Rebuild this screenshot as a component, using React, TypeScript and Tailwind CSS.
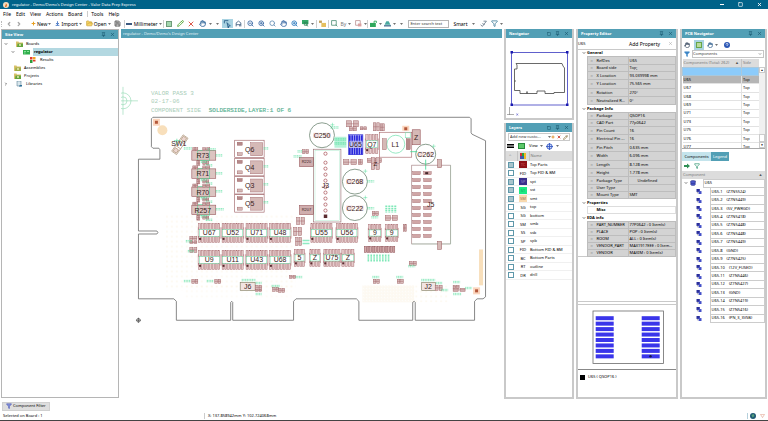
import {
  ArrowDownToLine,
  ChevronDown,
  ChevronLeft,
  ChevronRight,
  Database,
  Filter,
  FolderOpen,
  Hand,
  Pencil,
  Pin,
  Plus,
  Save,
  Search,
  Square,
  X,
  ZoomIn,
  ZoomOut,
} from "lucide-react";
import type { ReactNode } from "react";

const MENU = ["File", "Edit", "View", "Actions", "Board", "Tools", "Help"];

const LAYERS = [
  { code: "TC", name: "Top Parts", on: true, color: "bg-[#8f1218] text-[#d06060]" },
  { code: "FID", name: "Top FID & BM" },
  { code: "SP", name: "spt", on: true, color: "bg-[#3a2f8c] text-[#8f88d0]" },
  { code: "ST", name: "sst", on: true, color: "bg-[#1dea84] text-[#0fa85a]" },
  { code: "SM", name: "smt", on: true, color: "bg-[#f8d9ae] text-[#9a6a50]" },
  { code: "SG", name: "top" },
  { code: "SG", name: "bottom" },
  { code: "SM", name: "smb" },
  { code: "SS", name: "ssb" },
  { code: "SP", name: "spb" },
  { code: "FID", name: "Bottom FID & BM" },
  { code: "BC", name: "Bottom Parts" },
  { code: "RT", name: "outline" },
  { code: "DR", name: "drill" },
];

type PropRow = { label: string; value: string; h: string; indent?: boolean };
type PropGroup = { title: string; h: string; rows: PropRow[] };

const S = "h-[7px]";
const M = "h-[8px]";
const L = "h-[9px]";

const PROPS: PropGroup[] = [
  {
    title: "General",
    h: S,
    rows: [
      { label: "RefDes", value: "U65", h: M },
      { label: "Board side", value: "Top;", h: S },
      { label: "X Location", value: "93.039998 mm", h: M },
      { label: "Y Location", value: "75.565 mm", h: L },
      { label: "Rotation", value: "270°", h: M },
      { label: "Neutralized R...", value: "0°", h: M },
    ],
  },
  {
    title: "Package Info",
    h: M,
    rows: [
      { label: "Package", value: "QSOP16", h: S },
      { label: "CAD Part", value: "77p0642", h: S },
      { label: "Pin Count", value: "16", h: M },
      { label: "Electrical Pin ...", value: "16", h: L },
      { label: "Pin Pitch", value: "0.635 mm", h: M },
      { label: "Width", value: "6.096 mm", h: L },
      { label: "Length", value: "8.128 mm", h: M },
      { label: "Height", value: "1.778 mm", h: M },
      { label: "Package Type", value: "Undefined", h: M, indent: true },
      { label: "User Type", value: "", h: S },
      { label: "Mount Type", value: "SMT", h: S },
    ],
  },
  { title: "Properties", h: M, rows: [] },
  {
    title: "EDA info",
    h: M,
    rows: [
      { label: "PART_NUMBER", value: "77P0642 : 0 Item(s)", h: S },
      { label: "PLACE", value: "POP : 0 Item(s)", h: S },
      { label: "ROOM", value: "ALL : 0 Item(s)", h: S },
      { label: "VENDOR_PART", value: "MAX1917EEE : 0 Item...", h: S },
      { label: "VENDOR", value: "MAXIM : 0 Item(s)", h: S },
    ],
  },
];

const COMPONENTS = ["U65", "U67", "U68", "U69", "U71", "U73", "U75", "U76", "U77"];

const PINS = [
  "Z7N5524",
  "Z7N5449",
  "5V_PWRGD",
  "Z7N5418",
  "Z7N5448",
  "Z7N5448",
  "Z7N5449",
  "GND",
  "Z7N5425",
  "12V_FUSED",
  "Z7N5446",
  "Z7N5427",
  "GND",
  "Z7N5419",
  "Z7N5416",
  "PN_3_3VSB",
];

function Caret() {
  return (
    <svg viewBox="0 0 4 2" className="h-[2px] w-[3px] shrink-0">
      <path d="M0 0h4L2 2z" fill="#444" />
    </svg>
  );
}

function Sep() {
  return <span className="h-[8px] w-px shrink-0 bg-[#cfcfcf]" />;
}

function Tool({ label, active, children }: { label: string; active?: boolean; children: ReactNode }) {
  return (
    <button
      type="button"
      aria-label={label}
      className={`flex h-[9px] w-[11px] shrink-0 items-center justify-center ${active ? "bg-[#a9d3e2]" : ""}`}
    >
      {children}
    </button>
  );
}

function PanelHeader({ title, max }: { title: string; max?: boolean }) {
  return (
    <header className="flex h-[9px] shrink-0 items-center justify-between bg-[#529fb5] px-[3px] text-white">
      <h2 className="font-bold">{title}</h2>
      <div className="flex items-center gap-[4px] text-[#1c5a70]">
        {max && <Square size={4} strokeWidth={3} />}
        <Pin size={5} strokeWidth={3} />
        <X size={5} strokeWidth={3} />
      </div>
    </header>
  );
}

function FolderIcon({ color }: { color: string }) {
  return (
    <svg viewBox="0 0 14 12" className="h-[6px] w-[7px] shrink-0">
      <path d="M0 1h5l1 2h8v9H0z" fill="#d9c26a" />
      <path d="M3 5h11v7H2z" fill={color} />
      <circle cx="8" cy="8" r="1.8" fill="#f4f0c0" />
    </svg>
  );
}

function SiteTree() {
  return (
    <ul className="pt-px">
      <li className="flex h-[8px] items-center gap-[3px] pl-[2px]">
        <ChevronDown size={4} strokeWidth={3} />
        <span className="w-[2px]" />
        <FolderIcon color="#63a53c" />
        Boards
      </li>
      <li className="flex h-[8px] items-center gap-[3px] pl-[9px]">
        <ChevronDown size={4} strokeWidth={3} />
        <span className="w-[2px]" />
        <svg viewBox="0 0 14 10" className="h-[5px] w-[7px] shrink-0">
          <rect width="14" height="9" fill="#2fae4c" />
          <path d="M2 3h4M8 3h4M2 6h3" stroke="#a6efb0" strokeWidth="1.5" />
        </svg>
        <a href="#regulator" className="h-full flex-1 bg-[#b3d8e1] pl-px font-bold leading-[8px]">
          regulator
        </a>
      </li>
      <li className="flex h-[8px] items-center gap-[3px] pl-[28px]">
        <svg viewBox="0 0 12 12" className="h-[6px] w-[6px] shrink-0">
          <rect width="5" height="5" fill="#e03c2c" />
          <rect x="6" width="5" height="5" fill="#f2a51e" />
          <rect y="6" width="5" height="6" fill="#2e9b3c" />
          <rect x="6" y="6" width="5" height="3" fill="#e03c2c" />
        </svg>
        <span className="pl-px">Results</span>
      </li>
      <li className="flex h-[8px] items-center gap-[3px] pl-[12px]">
        <FolderIcon color="#9fae48" />
        Assemblies
      </li>
      <li className="flex h-[8px] items-center gap-[3px] pl-[12px]">
        <FolderIcon color="#63a53c" />
        Projects
      </li>
      <li className="flex h-[8px] items-center gap-[3px] pl-[2px]">
        <ChevronRight size={4} strokeWidth={3} />
        <span className="w-[2px]" />
        <svg viewBox="0 0 14 12" className="h-[6px] w-[7px] shrink-0">
          <path d="M2 0h8v10H2z" fill="#d8e6ec" stroke="#466d85" />
          <path d="M6 10l2-2h4v3H6z" fill="#2d6f97" />
        </svg>
        Libraries
      </li>
    </ul>
  );
}

/* Board drawing */

function Scribble({ x, y, w = 8 }: { x: number; y: number; w?: number }) {
  return (
    <path
      d={`M${x} ${y}h${w}M${x} ${y + 1.4}h${w}`}
      stroke="#35d98c"
      strokeWidth="0.8"
      strokeDasharray="1.2 0.5"
      opacity="0.7"
    />
  );
}

function Passive({ x, y, w = 7, h = 4 }: { x: number; y: number; w?: number; h?: number }) {
  return (
    <g fill="#d9bcbc" stroke="#a3686b" strokeWidth="0.5">
      <rect x={x} y={y} width={w * 0.42} height={h} />
      <rect x={x + w * 0.58} y={y} width={w * 0.42} height={h} />
      <path d={`M${x} ${y + h / 2}h${w}`} />
    </g>
  );
}

function Label({ x, y, size = 7, children }: { x: number; y: number; size?: number; children: string }) {
  return (
    <text x={x} y={y + size * 0.36} fontSize={size} textAnchor="middle" fill="#3a1c20" stroke="none">
      {children}
    </text>
  );
}

function Chip({ x, y, w = 22, h = 19, n = 8, name }: { x: number; y: number; w?: number; h?: number; n?: number; name: string }) {
  const pitch = w / n;
  return (
    <g>
      {Array.from({ length: n }, (_, i) => (
        <g key={i} fill="#e6cbcb" stroke="#a86c70" strokeWidth="0.5">
          <rect x={x + i * pitch + 0.4} y={y} width={pitch - 0.9} height={h * 0.31} />
          <rect x={x + i * pitch + 0.4} y={y + h * 0.69} width={pitch - 0.9} height={h * 0.31} />
        </g>
      ))}
      <rect x={x + 1} y={y + h * 0.32} width={w - 2} height={h * 0.36} fill="#fff" stroke="#5fdca0" strokeWidth="0.5" />
      <path d={`M${x} ${y + h * 0.2}v${h * 0.6}M${x + w} ${y + h * 0.2}v${h * 0.6}`} stroke="#a25f63" strokeWidth="0.5" />
      <rect x={x + 0.8} y={y + h * 0.76} width="2" height="2" fill="#5b2c30" />
      <Label x={x + w / 2} y={y + h / 2}>
        {name}
      </Label>
    </g>
  );
}

function RoundCap({ cx, cy, r, name }: { cx: number; cy: number; r: number; name: string }) {
  return (
    <g>
      <rect x={cx - r * 0.7} y={cy - 2.5} width={r * 0.5} height="5" fill="#f0dcdc" />
      <rect x={cx + r * 0.2} y={cy - 2.5} width={r * 0.5} height="5" fill="#f0dcdc" />
      <circle cx={cx} cy={cy} r={r} fill="none" stroke="#6d8572" strokeWidth="0.8" />
      <path d={`M${cx + r - 2} ${cy - r}v4M${cx + r - 4} ${cy - r + 2}h4`} stroke="#35d98c" strokeWidth="0.4" />
      <Label x={cx} y={cy}>
        {name}
      </Label>
    </g>
  );
}

const BOARD_OUTLINE =
  "M153 117.5H470.5L472 119V133L473 134.5L486.5 141V297.5L484 299.5H478L475.5 302V321H416V303L415 302L413.500 303V321H359.500V302L357 299.500H296.500L294 302V321H233V303L232 302L231 303V321H176.500V302L174 299.500H138.500V234.500H157L158 233L157 231.500H138.500V159.500H160V150L159 148.500H153L151.500 147V119Z";

const PASSIVES: [number, number, number?, number?][] = [
  [190, 237, 7, 4],
  [190, 242, 7, 2],
  [190, 248, 7, 5],
  [192, 280, 6, 4],
  [215, 280, 6, 4],
  [256, 286, 6, 4],
  [256, 290, 6, 2],
  [273, 288, 6, 4],
  [279, 289, 6, 4],
  [290, 276, 6, 3],
  [303, 150, 6, 4],
  [347, 121, 12, 6],
  [350, 127, 7, 4],
  [361, 127, 6, 3],
  [344, 160, 13, 5],
  [359, 160, 4, 5],
  [374, 123, 6, 8],
  [381, 124, 4, 7],
  [368, 159, 14, 4],
  [372, 158, 8, 12],
  [373, 212, 6, 4],
  [386, 216, 12, 5],
  [404, 225, 3, 7],
  [410, 262, 7, 4],
  [374, 280, 6, 4],
  [398, 280, 6, 4],
  [436, 286, 7, 5],
  [454, 286, 6, 3],
  [454, 289, 12, 3],
  [297, 218, 8, 7],
  [294, 228, 8, 8],
  [296, 238, 6, 8],
];

const SCRIBBLES: [number, number, number?][] = [
  [184, 148, 8],
  [208, 149, 8],
  [216, 155, 7],
  [216, 173, 7],
  [216, 191, 7],
  [216, 209, 8],
  [184, 281, 7],
  [207, 281, 7],
  [186, 241, 6],
  [188, 251, 6],
  [272, 286, 8],
  [296, 277, 7],
  [294, 156, 8],
  [298, 151, 5],
  [331, 127, 8],
  [368, 181, 7],
  [368, 208, 7],
  [372, 217, 7],
  [373, 277, 7],
  [397, 277, 7],
  [409, 266, 7],
  [422, 280, 14],
  [242, 280, 14],
  [256, 283, 6],
  [437, 283, 6],
  [442, 290, 7],
  [454, 282, 7],
  [454, 294, 8],
  [466, 288, 7],
  [264, 148, 5],
  [264, 166, 5],
  [264, 184, 5],
  [264, 202, 5],
  [256, 294, 6],
];

function BoardView() {
  return (
    <svg
      viewBox="121 38 382 360"
      preserveAspectRatio="xMinYMin meet"
      className="h-full w-full font-['Liberation_Sans',sans-serif]"
    >
      <defs>
        <pattern id="drill" width="5" height="5" patternUnits="userSpaceOnUse">
          <circle cx="2" cy="2" r="0.6" fill="#f7e8c8" />
        </pattern>
        <pattern id="pads" width="3" height="3" patternUnits="userSpaceOnUse">
          <rect width="2.400" height="2.400" fill="#fff" stroke="#f6dfb8" strokeWidth="0.5" />
        </pattern>
      </defs>

      <g stroke="#8fd9b0" strokeWidth="0.6" fill="none">
        <circle cx="123" cy="101" r="4" />
        <circle cx="123" cy="101" r="8" />
        <path d="M121 101h17M123 87v28" />
      </g>
      <g className="font-['Liberation_Mono',monospace]" fontSize="6">
        <g fill="#a9cdb8">
          <text x="151" y="95">VALOR PASS 3</text>
          <text x="151" y="103">02-17-06</text>
          <text x="151" y="112">COMPONENT SIDE</text>
        </g>
        <text x="209" y="112" fill="#4d8f84" stroke="#7fdcb2" strokeWidth="0.2">
          SOLDERSIDE,LAYER:1 OF 6
        </text>
      </g>

      <rect x="166" y="215" width="130" height="76" fill="url(#drill)" />
      <rect x="184" y="286" width="108" height="14" fill="url(#drill)" opacity="0.6" />
      <rect x="363" y="286" width="52" height="17" fill="url(#pads)" opacity="0.45" />
      <rect x="416" y="286" width="34" height="17" fill="url(#drill)" />
      <path d={BOARD_OUTLINE} fill="none" stroke="#6a6a6a" strokeWidth="0.8" />

      <rect x="153" y="119" width="7" height="7" fill="#fbd5bd" />
      <rect x="155" y="121" width="3" height="3" fill="#b3573a" />
      <circle cx="162.500" cy="130.500" r="5" fill="#f8dfbb" />
      <rect x="403" y="126" width="7" height="5" fill="#fbd5bd" />
      <rect x="405" y="127.500" width="3" height="3" fill="#b3573a" />
      <rect x="480" y="250" width="4" height="36" fill="#f8dfbb" />
      <rect x="474" y="288" width="7" height="7" fill="#fbd5bd" />
      <rect x="476" y="290" width="3" height="3" fill="#b3573a" />

      {/* SW1 */}
      <g transform="rotate(-55 180 145)" fill="none" stroke="#a5886a" strokeWidth="0.6">
        <rect x="170" y="142" width="20" height="6" />
        <rect x="171" y="143" width="4" height="4" fill="#ecd6d0" />
        <rect x="185" y="143" width="4" height="4" fill="#ecd6d0" />
        <path d="M177 142v6M183 142v6" />
      </g>
      <path d="M174 141h7M177 139v6" stroke="#35d98c" strokeWidth="0.6" />
      <Label x={179} y={144}>
        SW1
      </Label>

      {/* power resistors */}
      {["R73", "R71", "R70", "R257"].map((name, i) => {
        const y = 151 + i * 18.2;
        return (
          <g key={name}>
            <rect x="192" y={y} width="24" height="9.500" fill="#dcc4c1" stroke="#99595d" strokeWidth="0.6" />
            <rect x="198" y={y - 0.5} width="12" height="10.500" fill="none" stroke="#35d98c" strokeWidth="0.5" />
            <Passive x={193} y={y - 3} w={5} h={3} />
            <Passive x={203} y={y - 3} w={7} h={3} />
            <Passive x={197} y={y + 10} w={3} h={5} />
            <Passive x={203} y={y + 11} w={6} h={3} />
            <Scribble x={206} y={y + 14} w={7} />
            <Scribble x={201} y={y + 10.500} w={6} />
            <Label x={203} y={y + 5}>
              {name}
            </Label>
          </g>
        );
      })}

      {/* Q transistors */}
      {["Q6", "Q4", "Q3", "Q5"].map((name, i) => {
        const y = 140.500 + i * 18.2;
        return (
          <g key={name} stroke="#99595d" strokeWidth="0.6">
            <rect x="235" y={y} width="29.500" height="17.500" fill="none" />
            <rect x="251" y={y + 2.500} width="12" height="13" fill="#d5b9b6" strokeWidth="0.4" />
            <rect x="237.500" y={y + 2} width="5" height="3" fill="#b58a8a" strokeWidth="0.4" />
            <rect x="237.500" y={y + 12.500} width="5" height="3" fill="#d5b9b6" strokeWidth="0.4" />
            <Label x={250} y={y + 9}>
              {name}
            </Label>
          </g>
        );
      })}

      <g fill="#d0aeae" stroke="#99595d" strokeWidth="0.6">
        <rect x="300" y="158" width="14" height="9" />
        <rect x="300" y="206" width="14" height="9" />
      </g>
      <Label x={307} y={162} size={4}>
        R220
      </Label>
      <Label x={307} y={210} size={4}>
        R207
      </Label>

      {/* J3 */}
      <rect x="314" y="149.500" width="27.500" height="73" fill="none" stroke="#8f6467" strokeWidth="0.6" />
      <rect x="315.500" y="151" width="24.500" height="70" fill="none" stroke="#9fe6c4" strokeWidth="0.4" />
      {[154, 163, 169, 175, 181, 187.500, 193, 199, 205, 211].map((y) => (
        <circle key={y} cx="326" cy={y} r="1.600" fill="none" stroke="#a4494f" strokeWidth="0.7" />
      ))}
      <rect x="324.300" y="215" width="3.500" height="3.500" fill="#5b2c30" />
      <Label x={326} y={186}>
        J3
      </Label>

      <RoundCap cx={322.500} cy={135.500} r={12.500} name="C250" />
      <RoundCap cx={355.500} cy={182} r={12.500} name="C268" />
      <RoundCap cx={355.500} cy={208.500} r={12.500} name="C222" />
      <RoundCap cx={426.500} cy={154.500} r={10} name="C262" />

      {/* U65 is the selected part */}
      <rect x="335" y="137" width="12" height="11" fill="#b5f2d8" />
      <Scribble x={335} y={139} w={12} />
      <Scribble x={335} y={143} w={12} />
      <rect x="349" y="135" width="14.500" height="20" fill="#dfe0fb" stroke="#2322c8" strokeWidth="0.6" />
      {[0, 1, 2, 3, 4, 5].map((i) => (
        <g key={i} fill="#2a28dc">
          <rect x={349.500 + i * 2.400} y="135.500" width="1.800" height="7" />
          <rect x={349.500 + i * 2.400} y="148" width="1.800" height="7" />
        </g>
      ))}
      <rect x="350" y="141" width="13" height="7" fill="#b9baf4" opacity="0.8" />
      <Label x={356} y={144.500}>
        U65
      </Label>
      <Chip x={366} y={135} w={13} h={19} n={4} name="Q7" />

      {/* L1 */}
      <rect x="380" y="132.500" width="32.500" height="25" fill="none" stroke="#a25f63" strokeWidth="0.6" />
      <circle cx="396.500" cy="144.500" r="9" fill="none" stroke="#7fe3b5" strokeWidth="0.8" />
      <rect x="383" y="139" width="4" height="11" fill="#d5b9b6" stroke="#99595d" strokeWidth="0.4" />
      <rect x="407" y="139" width="4" height="11" fill="#b58a8a" stroke="#99595d" strokeWidth="0.4" />
      <rect x="406" y="133" width="5" height="5" fill="none" stroke="#7fe3b5" strokeWidth="0.6" />
      <Label x={396} y={144.500}>
        L1
      </Label>
      <rect x="413" y="130" width="8" height="15" fill="#d5b9b6" stroke="#99595d" strokeWidth="0.6" />
      <Label x={417} y={137.500}>
        Z
      </Label>
      <path d="M411 152h7M426.500 160v10" stroke="#35d98c" strokeWidth="0.8" />

      {/* J5 */}
      <rect x="412.500" y="165.500" width="39" height="79" fill="none" stroke="#9a7476" strokeWidth="0.6" />
      <path d="M412.500 244.500h39V165.500" fill="none" stroke="#8fcfae" strokeWidth="0.4" />
      {Array.from({ length: 10 }, (_, i) => (
        <g key={i} fill="#d0a6a6" stroke="#99595d" strokeWidth="0.4">
          <rect x="413.500" y={172 + i * 7} width="7.500" height="3" />
          <rect x="424.500" y={172 + i * 7} width="7.500" height="3" />
        </g>
      ))}
      <rect x="426" y="172.500" width="3" height="2" fill="#43262a" />
      <rect x="438.500" y="160" width="4" height="8" fill="#d5b9b6" stroke="#99595d" strokeWidth="0.5" />
      <rect x="438.500" y="242" width="4" height="8" fill="#d5b9b6" stroke="#99595d" strokeWidth="0.5" />
      <Label x={431.500} y={205}>
        J5
      </Label>

      <Chip x={198.500} y={224} name="U67" />
      <Chip x={222} y={224} name="U52" />
      <Chip x={246} y={224} name="U71" />
      <Chip x={269.500} y={224} name="U48" />
      <Chip x={311} y={224} name="U55" />
      <Chip x={336.500} y={224} name="U56" />
      <Chip x={198.500} y={251} name="U9" />
      <Chip x={222} y={251} name="U11" />
      <Chip x={246} y={251} name="U43" />
      <Chip x={269.500} y={251} name="U68" />
      <Chip x={294.500} y={250} w={11} h={17} n={4} name="5" />
      <Chip x={310} y={250} w={11} h={17} n={4} name="Z" />
      <Chip x={324} y={250} w={17} h={17} n={6} name="U75" />
      <Chip x={342} y={250} w={13} h={17} n={4} name="Z" />
      <Chip x={369} y={225} w={13} h={17} n={5} name="9" />
      <Chip x={386} y={225} w={13} h={17} n={5} name="9" />

      {/* array above the edge connector */}
      {Array.from({ length: 12 }, (_, i) => (
        <rect
          key={i}
          x={365 + i * 2.600}
          y="247"
          width="1.900"
          height="6"
          fill="#d4abab"
          stroke="#8a4b50"
          strokeWidth="0.5"
        />
      ))}
      {Array.from({ length: 8 }, (_, i) => (
        <path
          key={i}
          d={`M${369 + i * 2.900} 255v7`}
          stroke="#7fe8b8"
          strokeWidth="1.600"
          strokeDasharray="1.500 0.4"
        />
      ))}
      {[0, 1, 2, 3].map((i) => (
        <path key={i} d={`M${387 + i * 3} 206v7`} stroke="#7fe8b8" strokeWidth="2" strokeDasharray="1.500 0.6" />
      ))}
      <path d="M303 241h7M303 244h7" stroke="#8fecc4" strokeWidth="1.500" />

      <g fill="#f2e4e2" stroke="#7d7a5c" strokeWidth="0.6">
        <rect x="240.500" y="283" width="15" height="8" />
        <rect x="422.500" y="283" width="14" height="8" />
      </g>
      <Label x={248} y={287}>
        J6
      </Label>
      <Label x={429} y={287}>
        J2
      </Label>

      {PASSIVES.map(([x, y, w, h]) => (
        <Passive key={`${x}-${y}`} x={x} y={y} w={w} h={h} />
      ))}
      <Label x={376} y={164} size={6}>
        Z
      </Label>
      {SCRIBBLES.map(([x, y, w]) => (
        <Scribble key={`${x}-${y}`} x={x} y={y} w={w} />
      ))}

      <g stroke="#333" strokeWidth="0.6" fill="none">
        <circle cx="138.500" cy="321" r="1.800" />
        <path d="M136 321h5M138.500 318.500v5" />
      </g>
    </svg>
  );
}

function NavigatorPreview() {
  return (
    <svg viewBox="507 39 66 80" className="h-[80px] w-full">
      <rect x="512.500" y="53.500" width="56" height="52.500" fill="none" stroke="#3a3ac0" strokeWidth="0.8" />
      <g fill="#1a1ab0">
        <rect x="511.500" y="52" width="2.500" height="2.500" />
        <rect x="567" y="52" width="2.500" height="2.500" />
        <rect x="511.500" y="104.500" width="2.500" height="2.500" />
        <rect x="567" y="104.500" width="2.500" height="2.500" />
      </g>
      <path
        d="M517 64.500H563L564 67L565.500 69V93.500H555V94.500H546V92H538V94.500H528V92.500V94.500H521V91.500H515.500V82H517M515.500 82V70H518V66L517 64.500"
        fill="none"
        stroke="#444"
        strokeWidth="0.8"
      />
      <path d="M510.500 108v8M508 115.500h7" stroke="#777" strokeWidth="0.6" />
      <path d="M517.500 114.500l1.500 2m0-2l-1.500 2" stroke="#3a3ac0" strokeWidth="0.5" />
    </svg>
  );
}

function LayersPanel() {
  return (
    <>
      <div className="mx-[2px] mt-px flex h-[8px] items-center border border-[#c9c9c9] pl-px">
        <select aria-label="Layer set" className="h-full w-[38px] appearance-none text-[#333]">
          <option>Add new custo...</option>
        </select>
        <Caret />
        <div className="ml-auto flex items-center gap-[2px] pr-px">
          <Plus size={4} strokeWidth={5} className="text-[#e08a1e]" />
          <X size={4} strokeWidth={5} className="text-[#c93a2a]" />
          <Pencil size={5} strokeWidth={3} className="text-[#8a7440]" />
        </div>
      </div>
      <div className="flex h-[10px] items-center gap-[3px] pl-px">
        <span className="h-[4px] w-[7px] border-y border-black bg-[#777]" />
        <span className="ml-px h-[6px] w-[7px] border border-[#288a3c] bg-[#5cc768]" />
        <button type="button" className="ml-px flex items-center gap-[2px]">
          View <Caret />
        </button>
        <svg viewBox="0 0 12 12" className="h-[7px] w-[7px]">
          <circle cx="6" cy="6" r="4.500" fill="#cdd8f6" stroke="#3558c4" strokeWidth="1.500" />
          <path d="M6 0v12M0 6h12" stroke="#3558c4" strokeWidth="1.500" />
        </svg>
        <Caret />
      </div>
      <table className="h-[129px] w-full border-collapse">
        <thead>
          <tr className="h-[10px] bg-[#dcdcdc] text-left text-[#777]">
            <th className="w-[11px] border-r border-[#c4c4c4] p-0 pl-[3px] font-normal">^</th>
            <th className="w-[12px] border-r border-[#c4c4c4] p-0" aria-label="Color">
              <svg viewBox="0 0 6 6" className="mx-auto h-[6px] w-[6px]">
                <rect width="2" height="6" fill="#d62f2f" />
                <rect x="2" width="2" height="6" fill="#27a03b" />
                <rect x="4" width="2" height="6" fill="#f0b824" />
                <rect y="3" width="4" height="3" fill="#2f52c7" opacity="0.8" />
              </svg>
            </th>
            <th className="p-0 pl-px font-normal">Name</th>
          </tr>
        </thead>
        <tbody>
          {LAYERS.map((layer, i) => (
            <tr key={i} className="border-b border-[#f0f0f0]">
              <td className="p-0 pl-[2px]">
                <input
                  type="checkbox"
                  aria-label={layer.name}
                  defaultChecked={layer.on}
                  className="block h-[6px] w-[6px] appearance-none border border-[#5f98aa] bg-white checked:bg-[#a9c4cc]"
                />
              </td>
              <td className="p-0">
                <span className={`mx-auto block h-[7px] w-[8px] text-center leading-[7px] ${layer.color ?? ""}`}>
                  {layer.code}
                </span>
              </td>
              <td className="p-0 pl-px">{layer.name}</td>
            </tr>
          ))}
        </tbody>
      </table>
    </>
  );
}

function PropertyTable() {
  return (
    <table className="w-full table-fixed border-collapse border-y border-[#c9c9c9]">
      <colgroup>
        <col className="w-[9px]" />
        <col className="w-[41px]" />
        <col />
      </colgroup>
      {PROPS.map((group) => (
        <tbody key={group.title}>
          <tr className={group.h}>
            <td className="p-0 pl-[4px]">
              <ChevronDown size={4} strokeWidth={3} />
            </td>
            <th colSpan={2} className="p-0 text-left font-bold leading-[6px] text-black">
              {group.title}
            </th>
          </tr>
          {group.title === "Properties" && (
            <tr className={S}>
              <td className="p-0" />
              <th colSpan={2} className="border border-[#ddd] p-0 pl-[9px] text-left font-bold leading-[6px]">
                Misc
              </th>
            </tr>
          )}
          {group.rows.map((row) => (
            <tr key={row.label} className={row.h}>
              <td className="p-0" />
              <td className="overflow-hidden whitespace-nowrap border border-[#bdbdbd] bg-[#d3d3d3] p-0 leading-[6px]">
                <span className="inline-block w-[9px] pl-[3px] text-[#8a8a8a]">¤</span>
                {row.label}
              </td>
              <td
                className={`overflow-hidden whitespace-nowrap border border-[#bdbdbd] bg-[#d3d3d3] p-0 leading-[6px] ${row.indent ? "pl-[9px]" : "pl-px"}`}
              >
                {row.value}
              </td>
            </tr>
          ))}
        </tbody>
      ))}
    </table>
  );
}

function PackagePreview() {
  return (
    <svg viewBox="578 306 98 64" className="h-[64px] w-full">
      <rect x="593" y="312" width="70.500" height="52.500" fill="none" stroke="#6b6b6b" strokeWidth="0.8" />
      {Array.from({ length: 8 }, (_, i) => (
        <g key={i} fill="#3a35ea">
          <rect x="595.700" y={317.200 + i * 5.450} width="18" height="4" />
          <rect x="641.700" y={317.200 + i * 5.450} width="18" height="4" />
        </g>
      ))}
      <circle cx="650.500" cy="357.300" r="1.200" fill="#15154a" />
    </svg>
  );
}

function PcbNavigator() {
  return (
    <>
      <div className="flex h-[12px] items-center gap-[2px] pl-[2px] pt-px">
        <Hand size={6} strokeWidth={3} className="mr-[2px] text-[#44546a]" />
        <span className="flex h-[10px] w-[10px] items-center justify-center bg-[#a9d3e2]">
          <span className="h-[6px] w-[6px] border border-[#66a548] bg-[#b9db9c]" />
        </span>
        <Hand size={6} strokeWidth={3} className="ml-px text-[#3d6a94]" />
        <Caret />
        <svg viewBox="0 0 12 12" className="ml-[4px] h-[6px] w-[6px]">
          <circle cx="6" cy="6" r="6" fill="#2b57b5" />
          <path d="M4 5c0-3 4-3 4 0 0 1-2 1-2 3" stroke="#fff" fill="none" strokeWidth="1.500" />
        </svg>
      </div>
      <div className="flex h-[8px] items-center gap-[2px] pl-[2px] pr-px">
        <Filter size={6} fill="#3d86c6" className="text-[#3d86c6]" />
        <div className="flex h-full flex-1 items-center border border-[#c4c4c4] pr-px">
          <select aria-label="Object type" className="h-full flex-1 appearance-none text-[#333]">
            <option>Components</option>
          </select>
          <ChevronDown size={4} />
        </div>
      </div>
      <div className="mt-px flex h-[90px] overflow-hidden border-b border-[#a9a9a9]">
        <div className="min-w-0 flex-1">
          <table className="h-[93px] w-full table-fixed border-collapse">
            <thead>
              <tr className="h-[8px] bg-[#dcdcdc] text-left text-[#777]">
                <th className="w-[59px] whitespace-nowrap border-r border-[#c4c4c4] p-0 pl-px font-normal">
                  <span className="flex justify-between pr-[2px]">
                    Components (Total: 262) <span className="text-[#555]">▲</span>
                  </span>
                </th>
                <th className="p-0 pl-px font-normal">Side</th>
              </tr>
            </thead>
            <tbody>
              <tr className="bg-[#8ccbfa]">
                <td className="border border-[#a8c8dd] p-0">&nbsp;</td>
                <td className="border border-[#a8c8dd] p-0" />
              </tr>
              {COMPONENTS.map((name, i) => (
                <tr key={name} className={i === 0 ? "bg-[#b5b5b5]" : ""}>
                  <td className="border-b border-r border-[#e2e2e2] p-0 pl-px">{name}</td>
                  <td className="border-b border-[#e2e2e2] p-0 pl-px">Top</td>
                </tr>
              ))}
            </tbody>
          </table>
        </div>
        <div className="mt-[8px] flex w-[6px] flex-col items-center justify-between bg-[#f0f0f0]">
          <span className="flex h-[6px] w-full items-center justify-center border border-[#ccc] bg-white text-[3px]">▲</span>
          <div className="w-full">
            <span className="block h-[8px] w-full border border-[#ccc] bg-white" />
            <span className="flex h-[6px] w-full items-center justify-center border border-[#ccc] bg-white text-[3px]">▼</span>
          </div>
        </div>
      </div>
      <div className="mt-[3px] flex h-[9px] items-stretch">
        <button type="button" className="w-[29px] bg-[#c4e4ec]">
          Components
        </button>
        <button type="button" className="w-[18px] bg-[#529fb5] text-white">
          Legend
        </button>
      </div>
      <div className="flex h-[10px] items-center gap-[4px] pl-[2px]">
        <svg viewBox="0 0 12 12" className="h-[6px] w-[6px]">
          <path d="M0 4h6V1l6 5-6 5V8H0z" fill="#2f8f55" />
        </svg>
        <Filter size={6} strokeWidth={3} className="text-[#3f9d7c]" />
      </div>
      <table className="h-[152px] w-full table-fixed border-collapse">
        <colgroup>
          <col className="w-[21px]" />
          <col className="w-[7px]" />
          <col />
        </colgroup>
        <thead>
          <tr className="h-[8px] bg-[#dcdcdc] text-left text-[#777]">
            <th colSpan={3} className="p-0 pl-px font-normal">
              <span className="flex justify-between pr-[2px]">
                Component <span className="text-[#555]">▲</span>
              </span>
            </th>
          </tr>
        </thead>
        <tbody>
          <tr>
            <td className="p-0 pl-[2px]">
              <span className="flex items-center gap-[2px]">
                <ChevronDown size={4} strokeWidth={3} />
                <Database size={6} fill="#4a56c8" className="text-[#262c80]" />
              </span>
            </td>
            <td colSpan={2} className="border border-[#ccc] p-0 pl-px">
              U65
            </td>
          </tr>
          {PINS.map((net, i) => (
            <tr key={i}>
              <td className="p-0 pl-[14px]">
                <svg viewBox="0 0 12 12" className="h-[5px] w-[6px]">
                  <rect width="8" height="7" fill="#2a2f9c" />
                  <rect x="5" y="5" width="7" height="7" fill="#4450c8" />
                  <path d="M1 9h3" stroke="#888" strokeWidth="2" />
                </svg>
              </td>
              <td className="p-0" />
              <td className="whitespace-nowrap border border-[#ccc] p-0 pl-px leading-[6px]">
                U65-{i + 1}
                <span className="ml-[4px]">({net})</span>
              </td>
            </tr>
          ))}
        </tbody>
      </table>
    </>
  );
}

function Toolbar() {
  return (
    <div className="flex h-[9px] shrink-0 items-center pl-px text-[5px]">
      <span className="h-[6px] border-l border-dotted border-[#bbb]" />
      <div className="flex w-[24px] items-center justify-center gap-[4px] text-[#a7a7a7]">
        <ChevronLeft size={6} strokeWidth={5} />
        <ChevronRight size={6} strokeWidth={5} />
      </div>
      <button type="button" className="ml-[5px] flex items-center gap-px">
        <Plus size={5} strokeWidth={5} className="text-[#e8a020]" />
        New <Caret />
      </button>
      <button type="button" className="ml-[4px] flex items-center gap-px">
        <ArrowDownToLine size={5} strokeWidth={4} className="text-[#3b6fc0]" />
        Import <Caret />
      </button>
      <button type="button" className="ml-[4px] flex items-center gap-px">
        <FolderOpen size={7} fill="#f6d468" className="text-[#c59a28]" />
        Open <Caret />
      </button>
      <button type="button" aria-label="Save" className="ml-[3px]">
        <Save size={7} fill="#b5b5b5" className="text-[#555]" />
      </button>
      <span className="w-[3px]" />
      <Sep />
      <button type="button" className="ml-px flex items-center gap-px">
        <span className="mr-px h-[2px] w-[6px] bg-[#3d5a80]" />
        Millimeter <Caret />
      </button>
      <span className="w-px" />
      <Sep />
      <Tool label="Board">
        <span className="h-[6px] w-[6px] border border-[#6f9b7a] bg-[#a3d6ae]" />
      </Tool>
      <Tool label="Edit">
        <Pencil size={7} strokeWidth={3} className="text-[#59a83c]" />
      </Tool>
      <Tool label="Delete">
        <X size={8} strokeWidth={3} className="text-[#db5a4c]" />
      </Tool>
      <Tool label="Pan">
        <Hand size={7} strokeWidth={3} className="text-[#32689c]" />
      </Tool>
      <span className="ml-px mr-[4px] flex">
        <Caret />
      </span>
      <span className="mr-[3px] flex">
        <Caret />
      </span>
      <Tool label="Select" active>
        <svg viewBox="0 0 12 12" className="h-[8px] w-[8px]">
          <path d="M2 5V1h6M6 4l5 5H8v3z" fill="none" stroke="#245a86" strokeWidth="1.300" />
        </svg>
      </Tool>
      <Tool label="Measure">
        <svg viewBox="0 0 12 12" className="h-[7px] w-[7px]">
          <path d="M2 11V5l4-3 4 3v6M2 8h8M8 8v3" fill="none" stroke="#3e5d80" strokeWidth="1.400" />
        </svg>
      </Tool>
      <Sep />
      <Tool label="Zoom out">
        <ZoomOut size={7} strokeWidth={3} className="text-[#3f6da6]" />
      </Tool>
      <Tool label="Zoom in">
        <ZoomIn size={7} strokeWidth={3} className="text-[#3f6da6]" />
      </Tool>
      <Tool label="Zoom area">
        <Search size={7} strokeWidth={3} className="text-[#6c94b8]" />
      </Tool>
      <Tool label="Home">
        <Hand size={7} strokeWidth={3} className="text-[#3f6da6]" />
      </Tool>
      <Tool label="Zoom to selection">
        <ZoomIn size={7} strokeWidth={3} className="text-[#2f7cc0]" />
      </Tool>
      <Tool label="Display">
        <svg viewBox="0 0 12 12" className="h-[7px] w-[7px]">
          <rect width="11" height="7" fill="#33a867" />
          <path d="M6 6l4 5M4 4h5v5H4z" fill="none" stroke="#2d7f54" strokeWidth="1.300" />
        </svg>
      </Tool>
      <Caret />
      <span className="w-[2px]" />
      <Sep />
      <Tool label="Layers">
        <svg viewBox="0 0 12 12" className="h-[7px] w-[7px]">
          <path d="M0 1h5v4H0z" fill="#c2a05c" />
          <path d="M4 5h8v7H4z" fill="#e6c05e" />
        </svg>
      </Tool>
      <Sep />
      <Tool label="Select area">
        <svg viewBox="0 0 12 12" className="h-[7px] w-[7px]">
          <path d="M1 1h8v8H1zM8 8l3 3" fill="none" stroke="#4f8f78" strokeWidth="1.400" />
        </svg>
      </Tool>
      <button type="button" className="ml-px flex items-center gap-[2px] text-[#777]">
        By <Caret />
      </button>
      <span className="w-[2px]" />
      <Tool label="Clear selection">
        <svg viewBox="0 0 12 12" className="h-[7px] w-[7px]">
          <path d="M1 1h8v8H1z" fill="none" stroke="#b98d8d" strokeWidth="1.300" />
          <path d="M5 6h6v5H5z" fill="#d9a0a0" />
        </svg>
      </Tool>
      <Caret />
      <Sep />
      <Tool label="Unlock">
        <svg viewBox="0 0 12 12" className="h-[7px] w-[7px]">
          <path d="M0 5h10v7H0z" fill="#2ea85c" />
          <path d="M7 5V2h4v3" fill="none" stroke="#2ea85c" strokeWidth="1.500" />
        </svg>
      </Tool>
      <Caret />
      <Tool label="Highlight">
        <svg viewBox="0 0 12 12" className="h-[7px] w-[7px]">
          <path d="M1 8l3-6h4l3 6z" fill="#4aa9a0" />
          <path d="M0 10h12" stroke="#2d5a80" strokeWidth="2" />
        </svg>
      </Tool>
      <Caret />
      <span className="ml-[4px] flex">
        <Caret />
      </span>
      <input
        type="text"
        aria-label="Search"
        placeholder="Enter search text"
        className="ml-[5px] h-[8px] w-[41px] border border-[#b5b5b5] px-px text-[4px] placeholder:text-[#333]"
      />
      <button type="button" className="ml-[4px] flex items-center gap-[4px]">
        Smart <Caret />
      </button>
      <span className="w-[3px]" />
      <Tool label="Brush">
        <svg viewBox="0 0 12 12" className="h-[7px] w-[7px]">
          <path d="M1 8l3 3 7-9H6M4 6l4 2" fill="none" stroke="#667788" strokeWidth="1.400" />
        </svg>
      </Tool>
      <Tool label="Filter">
        <Filter size={7} strokeWidth={3} className="text-[#4d86a0]" />
      </Tool>
      <Caret />
    </div>
  );
}

export default function App() {
  return (
    <div className="flex min-h-screen flex-col whitespace-nowrap border-b border-[#444] bg-white font-['Noto_Sans','Open_Sans',sans-serif] text-[4px] leading-[6px] text-black">
      <header className="flex h-[9px] shrink-0 items-center justify-between bg-[#006389] text-white">
        <div className="flex items-center gap-[3px] pl-[3px]">
          <svg viewBox="0 0 12 12" className="h-[6px] w-[6px]">
            <circle cx="6" cy="6" r="6" fill="#f1dcc1" />
            <path d="M4 10c5 1 6-6 1-7 2 3-2 4-1 7z" fill="#e0762c" />
          </svg>
          <h1>regulator - Demo/Demo's Design Center - Valor Data Prep Express</h1>
        </div>
        <div className="flex items-center gap-[14px] pr-[6px]">
          <span className="h-px w-[4px] bg-white" />
          <Square size={5} strokeWidth={3} />
          <X size={5} strokeWidth={4} />
        </div>
      </header>

      <nav className="flex h-[10px] shrink-0 items-center gap-[5px] pl-[3px] text-[5px]">
        {MENU.map((item) => (
          <button key={item} type="button" className={item === "Tools" ? "border-l border-[#ccc] pl-[3px]" : ""}>
            {item}
          </button>
        ))}
      </nav>
      <Toolbar />

      <main className="mt-px flex flex-1 gap-[2px] pl-px pr-px">
        <aside className="flex min-h-[369px] w-[118px] shrink-0 flex-col self-start border border-[#b5b5b5]">
          <PanelHeader title="Site View" />
          <SiteTree />
        </aside>

        <section className="flex min-w-0 flex-1 flex-col">
          <header className="h-[9px] shrink-0 bg-[#529fb5] pl-[2px] leading-[9px] text-[#e1f1f5]">
            regulator - Demo/Demo's Design Center
          </header>
          <BoardView />
        </section>

        <aside className="flex w-[70px] shrink-0 flex-col gap-[3px] self-start">
          <section className="border-2 border-t-0 border-[#c9c9c9]">
            <PanelHeader title="Navigator" max />
            <NavigatorPreview />
          </section>
          <section className="min-h-[276px] border-2 border-t-0 border-[#c9c9c9]">
            <PanelHeader title="Layers" max />
            <LayersPanel />
          </section>
        </aside>

        <aside className="flex w-[102px] shrink-0 flex-col self-start border-2 border-t-0 border-[#c9c9c9]">
          <PanelHeader title="Property Editor" />
          <div className="flex h-[11px] items-center">
            <span>U65</span>
            <button type="button" className="ml-auto mr-[8px] text-[5px]">
              Add Property
            </button>
            <X size={5} className="mr-[3px] text-[#999]" />
          </div>
          <div className="min-h-[252px]">
            <PropertyTable />
          </div>
          <div className="border-t-4 border-double border-[#c9c9c9]">
            <PackagePreview />
          </div>
          <div className="flex h-[28px] items-start gap-[3px] border-t border-[#888] pl-[2px] pt-[4px]">
            <span className="mt-px h-[5px] w-[5px] bg-black" />
            U65 ( QSOP16 )
          </div>
        </aside>

        <aside className="flex min-h-[370px] w-[87px] shrink-0 flex-col self-start border-2 border-t-0 border-[#c9c9c9]">
          <PanelHeader title="PCB Navigator" />
          <PcbNavigator />
        </aside>
      </main>

      <div className="mt-px flex h-[10px] shrink-0 items-center pl-[2px]">
        <button type="button" className="flex h-[9px] items-center gap-px border border-[#d0d0d0] bg-[#dedede] px-[3px]">
          <Filter size={6} fill="#8290d8" className="text-[#4450b0]" />
          Component Filter
        </button>
      </div>
      <footer className="flex h-[9px] shrink-0 items-center pl-[3px]">
        <span className="w-[201px]">Selected on Board : 1</span>
        <span className="border-l border-[#ccc] pl-[3px]">X: 137.858942mm Y: 102.724068mm</span>
        <span className="ml-auto flex items-center gap-[4px] border-l border-[#b5d0dc] pl-[2px] pr-[3px]">
          <svg viewBox="0 0 12 12" className="h-[6px] w-[6px]">
            <circle cx="6" cy="6" r="6" fill="#1f5a74" />
            <path d="M3 4l4-2 2 4-4 3z" fill="#57a07c" />
          </svg>
          <svg viewBox="0 0 12 10" className="h-[4px] w-[5px]">
            <path d="M1 1h10L6 9z" fill="#fff" stroke="#e0a08c" strokeWidth="1.500" />
          </svg>
        </span>
      </footer>
    </div>
  );
}
